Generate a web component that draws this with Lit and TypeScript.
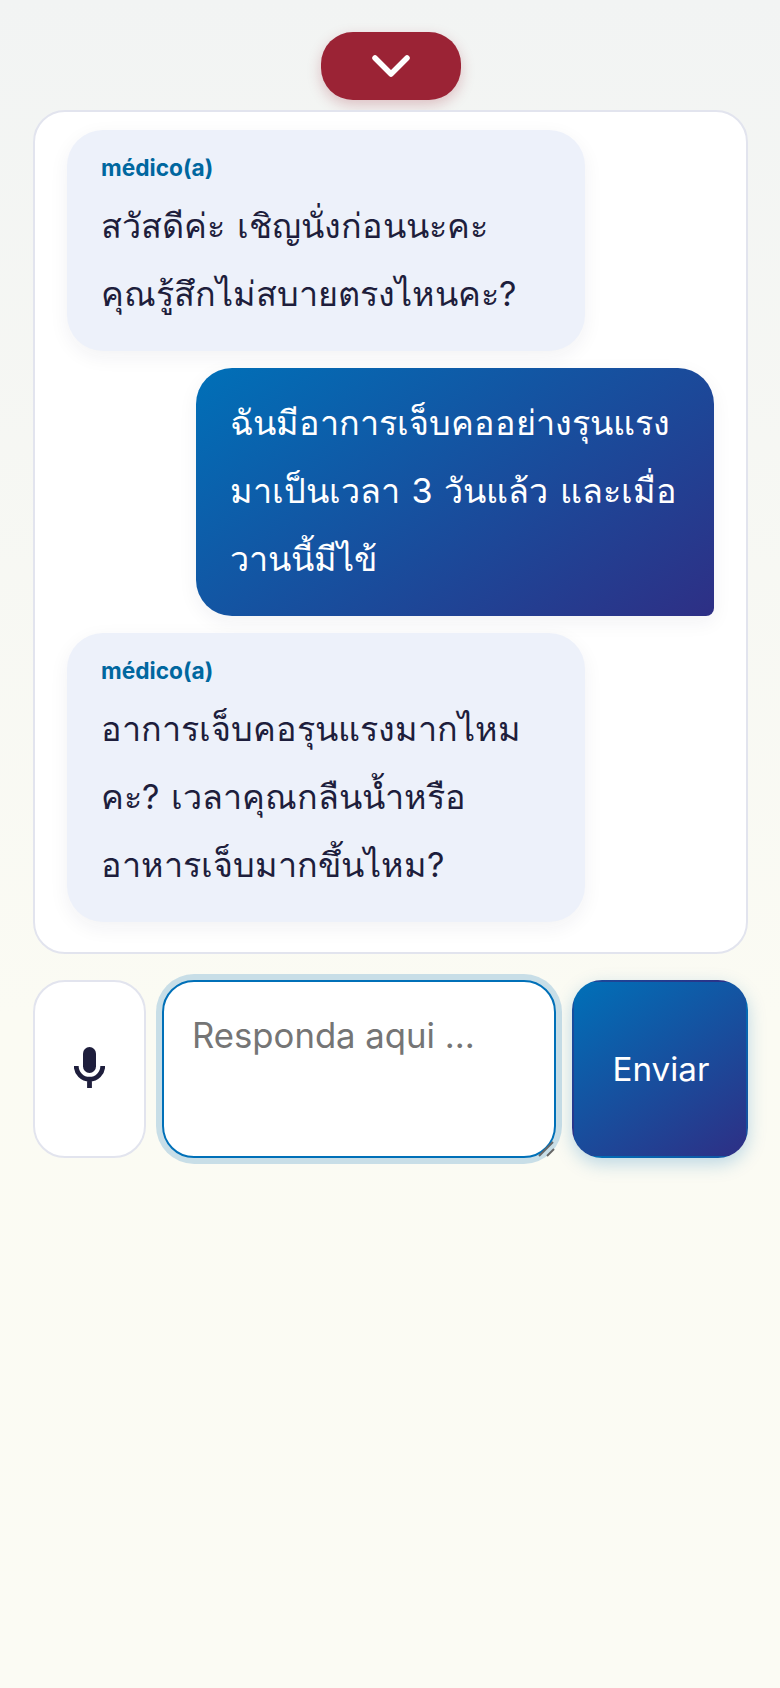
import { LitElement, html, css } from 'lit';
import { customElement } from 'lit/decorators.js';

const messages = [
  { from: 'doctor', lines: ['สวัสดีค่ะ เชิญนั่งก่อนนะคะ', 'คุณรู้สึกไม่สบายตรงไหนคะ?'] },
  { from: 'me', lines: ['ฉันมีอาการเจ็บคออย่างรุนแรง', 'มาเป็นเวลา 3 วันแล้ว และเมื่อ', 'วานนี้มีไข้'] },
  { from: 'doctor', lines: ['อาการเจ็บคอรุนแรงมากไหม', 'คะ? เวลาคุณกลืนน้ำหรือ', 'อาหารเจ็บมากขึ้นไหม?'] },
];

@customElement('app-root')
export class AppRoot extends LitElement {
  static styles = css`
    :host {
      display: block;
      min-height: 1688px;
      box-sizing: border-box;
      padding: 32px 32px 0 33px;
      background: linear-gradient(180deg, #f2f4f3 0%, #fbfbf3 60%, #fbfbf4 100%);
      font-family: Inter, 'Noto Sans', sans-serif;
      color: #1e1e3c;
    }

    .toggle {
      display: flex;
      align-items: center;
      justify-content: center;
      width: 140px;
      height: 68px;
      margin: 0 auto 10px;
      padding: 0;
      border: none;
      border-radius: 32px;
      background: #9b2335;
      box-shadow: 0 5px 14px rgba(155, 35, 53, 0.25);
    }

    .card {
      display: flex;
      flex-direction: column;
      gap: 17px;
      padding: 18px 32px 30px;
      background: #fff;
      border: 2px solid #e2e4ee;
      border-radius: 32px;
    }

    .bubble {
      box-sizing: border-box;
      width: 518px;
      border-radius: 36px;
      font-size: 34.15px;
      word-spacing: 2px;
      line-height: 68px;
      box-shadow: 0 6px 20px rgba(30, 30, 60, 0.06);
    }

    .line {
      white-space: nowrap;
    }

    .doctor {
      padding: 22px 34px 23px;
      background: #edf1fa;
      color: #1e1e3c;
    }

    .me {
      align-self: flex-end;
      padding: 21px 34px 23px;
      color: #fff;
      background: linear-gradient(145deg, #0070b8 0%, #2e2f85 100%);
      border-bottom-right-radius: 8px;
    }

    .who {
      font-size: 22.7px;
      font-weight: 700;
      word-spacing: 0;
      line-height: 32px;
      margin-bottom: 8px;
      color: #00679f;
    }

    .composer {
      display: flex;
      gap: 16px;
      margin-top: 26px;
      height: 178px;
    }

    .mic {
      display: flex;
      align-items: center;
      justify-content: center;
      box-sizing: border-box;
      width: 113px;
      padding: 0 1px 3px 0;
      background: #fff;
      border: 2px solid #e2e4ee;
      border-radius: 32px;
    }

    .field {
      position: relative;
      flex: 1;
      min-width: 0;
      display: flex;
    }

    textarea {
      box-sizing: border-box;
      flex: 1;
      min-width: 0;
      height: 178px;
      padding: 31px 28px;
      border: 2px solid #0070b8;
      border-radius: 32px;
      outline: none;
      resize: none;
      background: #fff;
      box-shadow: 0 0 0 6px rgba(0, 112, 184, 0.2);
      font: 34.7px / 44px Inter, 'Noto Sans', sans-serif;
    }

    .grip {
      position: absolute;
      right: 0;
      bottom: 1px;
    }

    .send {
      box-sizing: border-box;
      width: 176px;
      padding: 0 0 1px 2px;
      border: 2px solid transparent;
      border-radius: 30px;
      color: #fff;
      font: 400 33.2px Inter, 'Noto Sans', sans-serif;
      background: linear-gradient(145deg, #0070b8 0%, #2e2f85 100%);
      box-shadow: 0 6px 18px rgba(0, 112, 184, 0.25);
    }
  `;

  render() {
    return html`
      <button class="toggle" aria-label="Recolher">
        <svg width="38" height="22" viewBox="0 0 38 22" fill="none" stroke="#fff" stroke-width="5.5" stroke-linecap="round" stroke-linejoin="round">
          <path d="M3 3 L19 19 L35 3" />
        </svg>
      </button>
      <div class="card">
        ${messages.map(
          (m) => html`
            <div class="bubble ${m.from}">
              ${m.from === 'doctor' ? html`<div class="who">médico(a)</div>` : ''}
              ${m.lines.map((l) => html`<div class="line">${l}</div>`)}
            </div>
          `
        )}
      </div>
      <div class="composer">
        <button class="mic" aria-label="Microfone">
          <svg width="31" height="41" viewBox="0 0 31 41" fill="none">
            <rect x="9" y="0" width="13" height="26" rx="6.5" fill="#1e1e3c" />
            <path d="M2.25 19 A13.25 13.25 0 0 0 28.75 19 M15.5 33 V41" stroke="#1e1e3c" stroke-width="4.8" />
          </svg>
        </button>
        <div class="field">
          <textarea placeholder="Responda aqui ..."></textarea>
          <svg class="grip" width="18" height="16" viewBox="0 0 18 16" fill="none">
            <path d="M1 15 L15 1" stroke="#666" stroke-width="2" />
            <path d="M9 15 L16 8" stroke="#666" stroke-width="2" />
          </svg>
        </div>
        <button class="send">Enviar</button>
      </div>
    `;
  }
}
